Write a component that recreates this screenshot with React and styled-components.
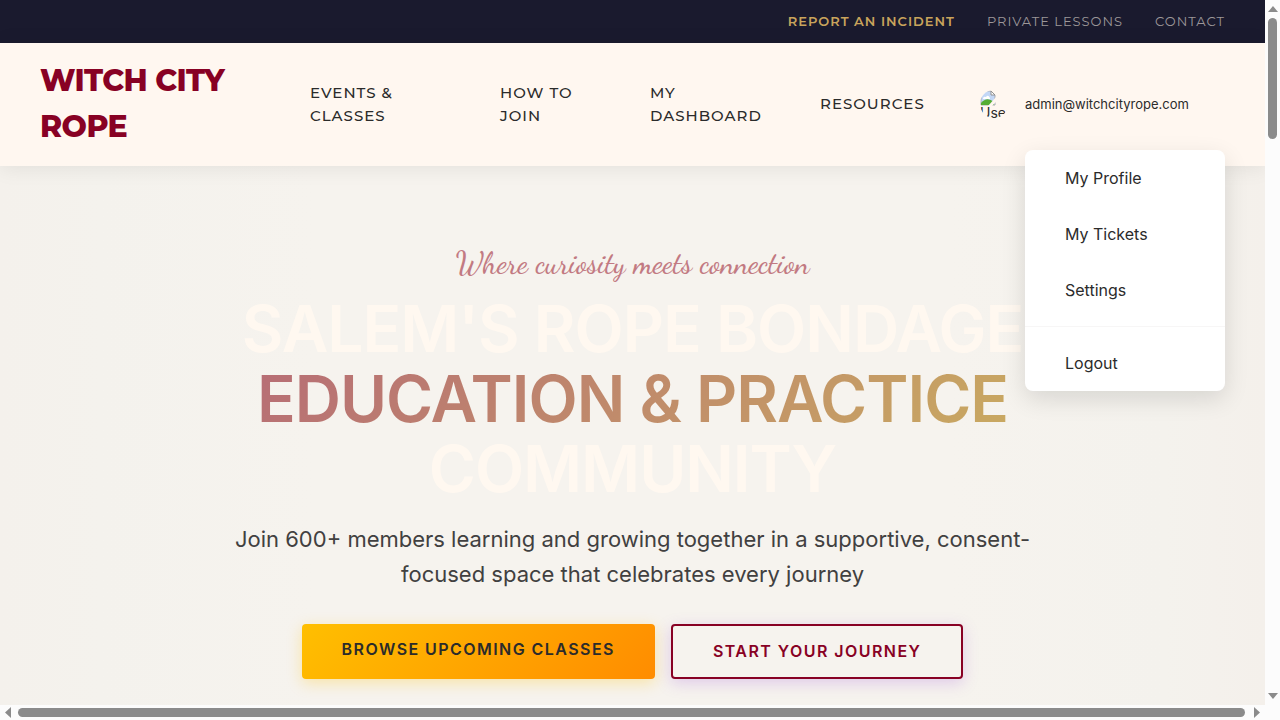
import React from "react";
import styled, { createGlobalStyle } from "styled-components";

const GlobalStyle = createGlobalStyle`
  *, *::before, *::after { box-sizing: border-box; }
  body {
    margin: 0;
    background: #fcfcfc;
    color: #2b2b2b;
    font-family: Inter, "Liberation Sans", sans-serif;
  }
  a { color: inherit; text-decoration: none; }
`;

const display = `Montserrat, Inter, sans-serif`;

const Frame = styled.div`
  display: grid;
  grid-template: minmax(0, 1fr) 15px / minmax(0, 1fr) 15px;
  height: 100vh;
`;

const Page = styled.div`
  display: flex;
  flex-direction: column;
  overflow: hidden;
  background: #f5f2ed;
`;

const UtilityBar = styled.nav`
  display: flex;
  justify-content: flex-end;
  flex: none;
  gap: 32px;
  padding: 11px 40px 12px;
  background: #1a1a2e;
  font: 400 13px/20px ${display};
  letter-spacing: 1px;
  text-transform: uppercase;
`;

const UtilityLink = styled.a`
  color: ${(p) => (p.$strong ? "#c9a45c" : "#9c9799")};
  font-weight: ${(p) => (p.$strong ? 600 : 400)};
`;

const Header = styled.header`
  position: relative;
  z-index: 2;
  display: flex;
  align-items: center;
  flex: none;
  min-height: 123px;
  padding: 14px 40px 16px;
  background: #fff7f0;
  box-shadow: 0 2px 20px rgba(0, 0, 0, 0.08);
`;

const Logo = styled.a`
  flex: none;
  width: 270px;
  padding-right: 60px;
  color: #880124;
  font: 800 30px/46px ${display};
  letter-spacing: -0.02em;
`;

const MainNav = styled.nav`
  display: grid;
  flex: 1;
  grid-template-columns: 19fr 15fr 17fr 16fr;
  align-items: center;
  font: 500 15px/23px ${display};
  letter-spacing: 1px;
  text-transform: uppercase;
`;

const NavLink = styled.a`
  width: min-content;
  min-width: ${(p) => p.$min || 0}px;
`;

const Account = styled.div`
  position: relative;
  display: flex;
  align-items: center;
  flex: none;
  gap: 17px;
  width: 245px;
`;

const Avatar = styled.div`
  width: 28px;
  height: 28px;
  overflow: hidden;
  border-radius: 50%;
  font-size: 14px;
  line-height: 13px;
`;

const AvatarIcon = styled.svg`
  display: block;
  width: 16px;
  height: 16px;
`;

const AccountButton = styled.button`
  padding: 0;
  border: 0;
  background: none;
  color: inherit;
  font: 400 13px/20px Inter, sans-serif;
`;

const Menu = styled.div`
  position: absolute;
  top: 60px;
  right: 0;
  width: 200px;
  border-radius: 8px;
  background: #fff;
  box-shadow: 0 8px 24px rgba(0, 0, 0, 0.12);
`;

const MenuItem = styled.a`
  display: block;
  padding: 16px 40px;
  font-size: 16px;
  line-height: 24px;
`;

const MenuDivider = styled.hr`
  height: 1px;
  margin: 8px 0;
  border: 0;
  background: #f7f6f6;
`;

const Hero = styled.main`
  display: flex;
  flex: 1;
  flex-direction: column;
  align-items: center;
  padding: 76px 40px 0;
  background: linear-gradient(90deg, #f4f1ec, #f4f2ed 8%, #f6f3ee 25%, #f6f3ee 75%, #f4f2ed 92%, #f4f0eb);
  text-align: center;
`;

const Tagline = styled.p`
  margin: 0;
  color: #c27a82;
  font: 500 30px/42px Satisfy, "Dancing Script", "Liberation Serif", cursive;
`;

const Title = styled.h1`
  max-width: 900px;
  margin: 10px 0 0;
  color: #fff8f0;
  font-size: 64px;
  font-weight: 600;
  line-height: 70px;
  letter-spacing: -1px;
  text-transform: uppercase;
`;

const Accent = styled.span`
  display: table;
  margin: 0 auto;
  background: linear-gradient(135deg, #b76d75, #c9a961);
  background-clip: text;
  color: transparent;
`;

const Lead = styled.p`
  max-width: 800px;
  margin: 18px 0 32px;
  color: #414040;
  font-size: 22px;
  line-height: 35px;
`;

const Actions = styled.div`
  display: flex;
  gap: 16px;
`;

const ActionLink = styled.a`
  padding: 14px 40px;
  border-radius: 4px;
  font-size: 16px;
  font-weight: 600;
  line-height: 23px;
  letter-spacing: 0.09em;
  text-transform: uppercase;
  ${(p) =>
    p.$primary
      ? `background: linear-gradient(135deg, #ffbf00, #ff8c00);
         box-shadow: 0 4px 15px rgba(255, 191, 0, 0.3);`
      : `border: 2px solid #880124;
         color: #880124;
         background: #f6f3ee;
         box-shadow: 0 4px 15px rgba(157, 78, 221, 0.25);`}
`;

const ScrollTrack = styled.div`
  display: flex;
  flex-direction: ${(p) => (p.$vertical ? "column" : "row")};
  align-items: center;
  justify-content: space-between;
  padding: ${(p) => (p.$vertical ? "6px 0" : "0 5px")};
  background: #fcfcfc;
`;

const ScrollThumb = styled.div`
  flex: ${(p) => (p.$vertical ? "0 0 121px" : "1")};
  width: ${(p) => (p.$vertical ? "9px" : "auto")};
  height: ${(p) => (p.$vertical ? "auto" : "9px")};
  margin: ${(p) => (p.$vertical ? "6px 0 auto" : "0 9px 0 7px")};
  border-radius: 5px;
  background: #8b8b8b;
`;

const Arrow = ({ direction }) => {
  const points = {
    up: "0,6 5,0 10,6",
    down: "0,0 10,0 5,6",
    left: "6,0 6,11 0,5.5",
    right: "0,0 6,5.5 0,11",
  };
  const upright = direction === "up" || direction === "down";
  return (
    <svg width={upright ? 10 : 6} height={upright ? 6 : 11} aria-hidden="true">
      <polygon points={points[direction]} fill="#8b8b8b" />
    </svg>
  );
};

const BrokenImage = () => (
  <AvatarIcon viewBox="0 0 16 16" aria-hidden="true">
    <path d="M1 1H11L15 5V15H1Z" fill="#c3d7f6" stroke="#a9abb0" />
    <path d="M11 1V5H15Z" fill="#fff" stroke="#929292" />
    <path d="M3 9Q3 6 6 7Q8 4 10 8V9Z" fill="#fff" />
    <path d="M1 15V13Q7 6 14 12V15Z" fill="#55ad35" />
    <path d="M16 7L8 16H12L16 12Z" fill="#fff7f0" />
  </AvatarIcon>
);

export default function App() {
  return (
    <>
      <GlobalStyle />
      <Frame>
        <Page>
          <UtilityBar aria-label="Utility">
            <UtilityLink href="#report" $strong>Report an Incident</UtilityLink>
            <UtilityLink href="#lessons">Private Lessons</UtilityLink>
            <UtilityLink href="#contact">Contact</UtilityLink>
          </UtilityBar>
          <Header>
            <Logo href="#home">WITCH CITY ROPE</Logo>
            <MainNav aria-label="Main">
              <NavLink href="#events" $min={90}>Events &amp; Classes</NavLink>
              <NavLink href="#join" $min={80}>How to Join</NavLink>
              <NavLink href="#dashboard">My Dashboard</NavLink>
              <NavLink href="#resources">Resources</NavLink>
            </MainNav>
            <Account>
              <Avatar>
                <BrokenImage />
                User
              </Avatar>
              <AccountButton type="button">admin@witchcityrope.com</AccountButton>
              <Menu>
                <MenuItem href="#profile">My Profile</MenuItem>
                <MenuItem href="#tickets">My Tickets</MenuItem>
                <MenuItem href="#settings">Settings</MenuItem>
                <MenuDivider />
                <MenuItem href="#logout">Logout</MenuItem>
              </Menu>
            </Account>
          </Header>
          <Hero>
            <Tagline>Where curiosity meets connection</Tagline>
            <Title>
              Salem's Rope Bondage <Accent>Education &amp; Practice</Accent> Community
            </Title>
            <Lead>
              Join 600+ members learning and growing together in a supportive,
              consent-focused space that celebrates every journey
            </Lead>
            <Actions>
              <ActionLink href="#classes" $primary>Browse Upcoming Classes</ActionLink>
              <ActionLink href="#start">Start Your Journey</ActionLink>
            </Actions>
          </Hero>
        </Page>
        <ScrollTrack $vertical>
          <Arrow direction="up" />
          <ScrollThumb $vertical />
          <Arrow direction="down" />
        </ScrollTrack>
        <ScrollTrack>
          <Arrow direction="left" />
          <ScrollThumb />
          <Arrow direction="right" />
        </ScrollTrack>
      </Frame>
    </>
  );
}
